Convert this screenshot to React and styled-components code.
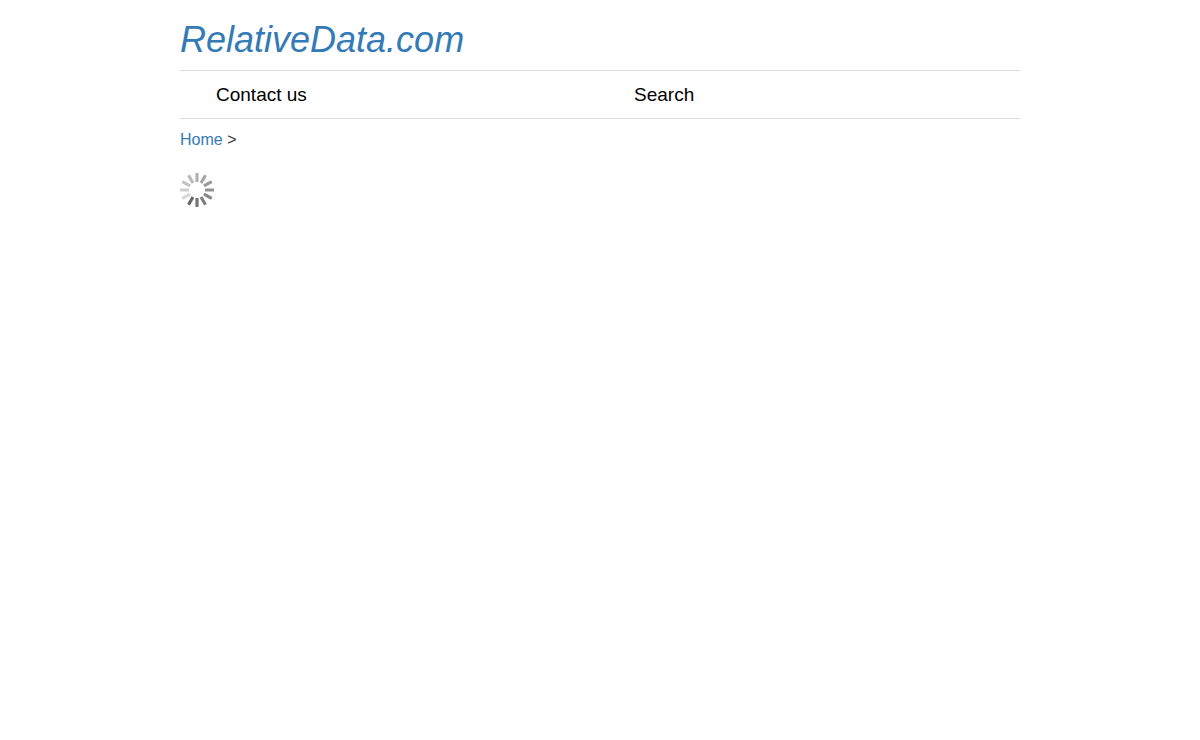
import styled, { createGlobalStyle } from 'styled-components';

// clockwise, starting from the bar at 12 o'clock
const bars = ['#b0b0b0', '#a6a6a6', '#9c9c9c', '#929292', '#888888', '#7f7f7f', '#757575', '#686868', '#d8d8d8', '#cecece', '#c4c4c4', '#bababa'];

export default function App(){
    return (
        <>
            <GlobalStyle />
            <Container>
                <Header>
                    <Logo href="#">RelativeData.com</Logo>
                </Header>
                <Menu>
                    <MenuLink href="#">Contact us</MenuLink>
                    <MenuLink href="#">Search</MenuLink>
                </Menu>
                <Breadcrumb>
                    <HomeLink href="#">Home</HomeLink> &gt;
                </Breadcrumb>
                <Spinner viewBox="0 0 34 34" aria-hidden="true">
                    {bars.map((color, i) => (
                        <rect
                            key={i}
                            x="15.4"
                            y="0"
                            width="3.2"
                            height="9"
                            rx="0.6"
                            fill={color}
                            transform={`rotate(${i * 30} 17 17)`}
                        />
                    ))}
                </Spinner>
            </Container>
        </>
    )
}

const GlobalStyle = createGlobalStyle`
body{
    margin: 0;
    background: #FFFFFF;
    color: #333333;
    font-family: "Liberation Sans", Arial, sans-serif;
    font-size: 16px;
    line-height: 24px;
}
`
const Container = styled.div`
    max-width: 840px;
    margin: 0 auto;
`
const Header = styled.header`
    padding: 20px 0 10px;
`
const Logo = styled.a`
    display: block;
    width: fit-content;
    font-size: 36px;
    font-style: italic;
    line-height: 40px;
    color: #337AB7;
    text-decoration: none;
`
const Menu = styled.nav`
    display: grid;
    grid-template-columns: 1fr 1fr;
    padding-right: 4px;
    border-top: 1px solid #DDDDDD;
    border-bottom: 1px solid #DDDDDD;
`
const MenuLink = styled.a`
    padding: 12px 0 11px 36px;
    font-size: 19px;
    line-height: 24px;
    color: #000000;
    text-decoration: none;
`
const Breadcrumb = styled.div`
    padding: 9px 0 21px;
`
const HomeLink = styled.a`
    color: #337AB7;
    text-decoration: none;
`
const Spinner = styled.svg`
    display: block;
    width: 34px;
    height: 34px;
`
